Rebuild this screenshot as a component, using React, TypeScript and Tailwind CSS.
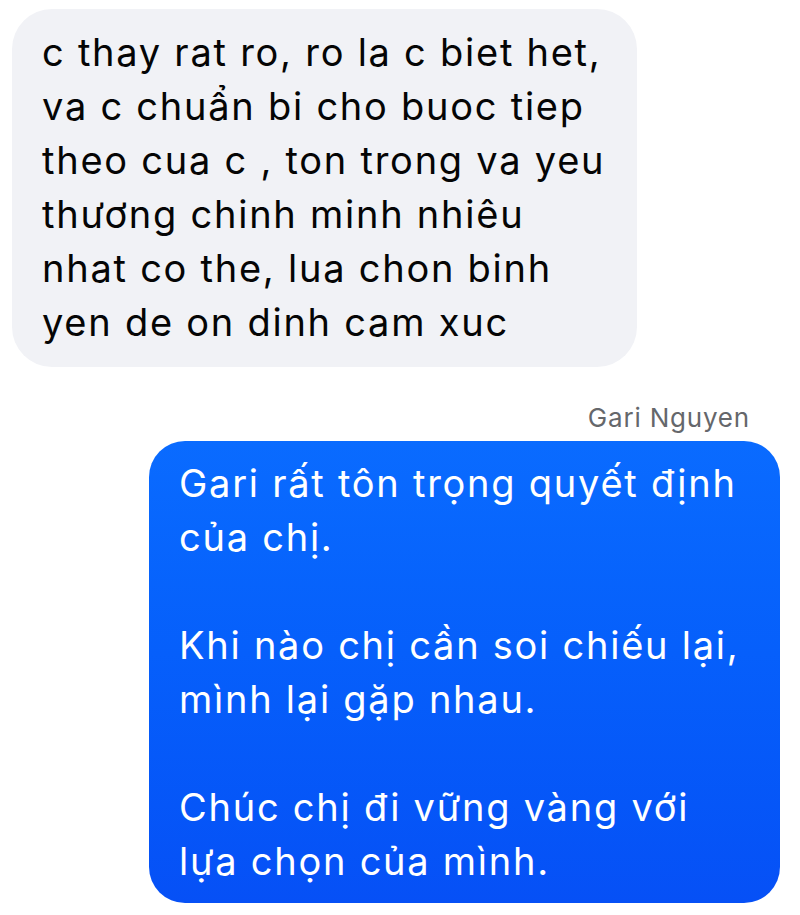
import React from 'react';

const incoming = [
  'c thay rat ro, ro la c biet het,',
  'va c chuẩn bi cho buoc tiep',
  'theo cua c , ton trong va yeu',
  'thương chinh minh nhiêu',
  'nhat co the, lua chon binh',
  'yen de on dinh cam xuc',
];

const outgoing = [
  'Gari rất tôn trọng quyết định',
  'của chị.',
  '',
  'Khi nào chị cần soi chiếu lại,',
  'mình lại gặp nhau.',
  '',
  'Chúc chị đi vững vàng với',
  'lựa chọn của mình.',
];

function Lines({ lines }: { lines: string[] }) {
  return (
    <>
      {lines.map((line, i) => (
        <div key={i} className="h-[54px] whitespace-nowrap">
          {line || '\u00a0'}
        </div>
      ))}
    </>
  );
}

export default function App() {
  return (
    <div className="min-h-[915px] w-[800px] bg-white font-['Inter','Noto_Sans',sans-serif] text-[38px] leading-[54px] tracking-[1.75px]">
      <div className="flex flex-col pt-[9px]">
        {/* received message */}
        <div className="ml-[12px] w-[625px] rounded-[40px] bg-[#f1f2f6] pl-[30px] pt-[16px] pb-[18px] text-[#050505]">
          <Lines lines={incoming} />
        </div>

        {/* sender label */}
        <div className="mt-[35px] pr-[50px] text-right text-[26px] leading-[32px] tracking-[0.8px] text-[#65676b]">
          Gari Nguyen
        </div>

        {/* sent message */}
        <div className="mt-[7px] ml-[149px] w-[631px] rounded-[36px] bg-gradient-to-b from-[#0a6bff] to-[#0650f6] pl-[30px] pt-[15px] pb-[15px] text-white">
          <Lines lines={outgoing} />
        </div>
      </div>
    </div>
  );
}
